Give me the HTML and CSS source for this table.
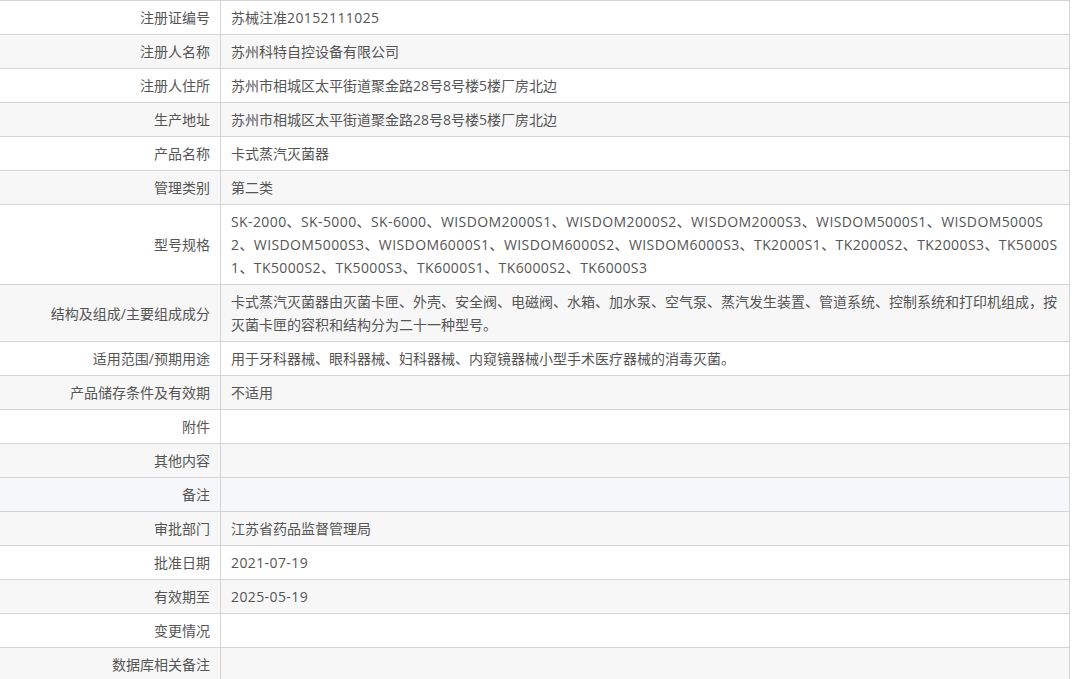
FILE: index.html
```html
<!DOCTYPE html>
<html lang="zh-CN">
<head>
<meta charset="utf-8">
<title>注册信息</title>
<link rel="stylesheet" href="styles.css">
</head>
<body>
<table class="info">
  <tbody>
    <tr><th>注册证编号</th><td>苏械注准<span class="lat">20152111025</span></td></tr>
    <tr><th>注册人名称</th><td>苏州科特自控设备有限公司</td></tr>
    <tr><th>注册人住所</th><td>苏州市相城区太平街道聚金路28号8号楼5楼厂房北边</td></tr>
    <tr><th>生产地址</th><td>苏州市相城区太平街道聚金路28号8号楼5楼厂房北边</td></tr>
    <tr><th>产品名称</th><td>卡式蒸汽灭菌器</td></tr>
    <tr><th>管理类别</th><td>第二类</td></tr>
    <tr><th>型号规格</th><td class="wrap lat">SK-2000、SK-5000、SK-6000、WISDOM2000S1、WISDOM2000S2、WISDOM2000S3、WISDOM5000S1、WISDOM5000S2、WISDOM5000S3、WISDOM6000S1、WISDOM6000S2、WISDOM6000S3、TK2000S1、TK2000S2、TK2000S3、TK5000S1、TK5000S2、TK5000S3、TK6000S1、TK6000S2、TK6000S3</td></tr>
    <tr><th>结构及组成/主要组成成分</th><td class="wrap">卡式蒸汽灭菌器由灭菌卡匣、外壳、安全阀、电磁阀、水箱、加水泵、空气泵、蒸汽发生装置、管道系统、控制系统和打印机组成，按灭菌卡匣的容积和结构分为二十一种型号。</td></tr>
    <tr><th>适用范围/预期用途</th><td>用于牙科器械、眼科器械、妇科器械、内窥镜器械小型手术医疗器械的消毒灭菌。</td></tr>
    <tr><th>产品储存条件及有效期</th><td>不适用</td></tr>
    <tr><th>附件</th><td></td></tr>
    <tr><th>其他内容</th><td></td></tr>
    <tr class="hover"><th>备注</th><td></td></tr>
    <tr><th>审批部门</th><td>江苏省药品监督管理局</td></tr>
    <tr><th>批准日期</th><td class="lat">2021-07-19</td></tr>
    <tr><th>有效期至</th><td class="lat">2025-05-19</td></tr>
    <tr><th>变更情况</th><td></td></tr>
    <tr><th>数据库相关备注</th><td></td></tr>
  </tbody>
</table>
</body>
</html>
```

FILE: styles.css
```css
html, body {
  margin: 0;
  padding: 0;
  background: #ffffff;
}

body {
  font-family: "Open Sans", "Noto Sans CJK SC", sans-serif;
  font-size: 14px;
  color: #555555;
}

.info {
  width: 1070px;
  border-collapse: collapse;
  table-layout: fixed;
  border-top: 1px solid #d4d4d4;
  border-right: 1px solid #d4d4d4;
}

.info th,
.info td {
  border-bottom: 1px solid #d4d4d4;
  line-height: 23px;
  padding: 5px 10px;
  vertical-align: middle;
  font-weight: normal;
  height: 23px;
}

.info th {
  width: 200px;
  text-align: right;
  border-right: 1px solid #d4d4d4;
}

.info td {
  text-align: left;
}

.info .wrap {
  word-break: break-all;
}

.info .lat {
  letter-spacing: 0.4px;
}

.info tr:nth-child(even) {
  background: #f7f7f7;
}

.info tr.hover {
  background: #f5f7fa;
}
```
